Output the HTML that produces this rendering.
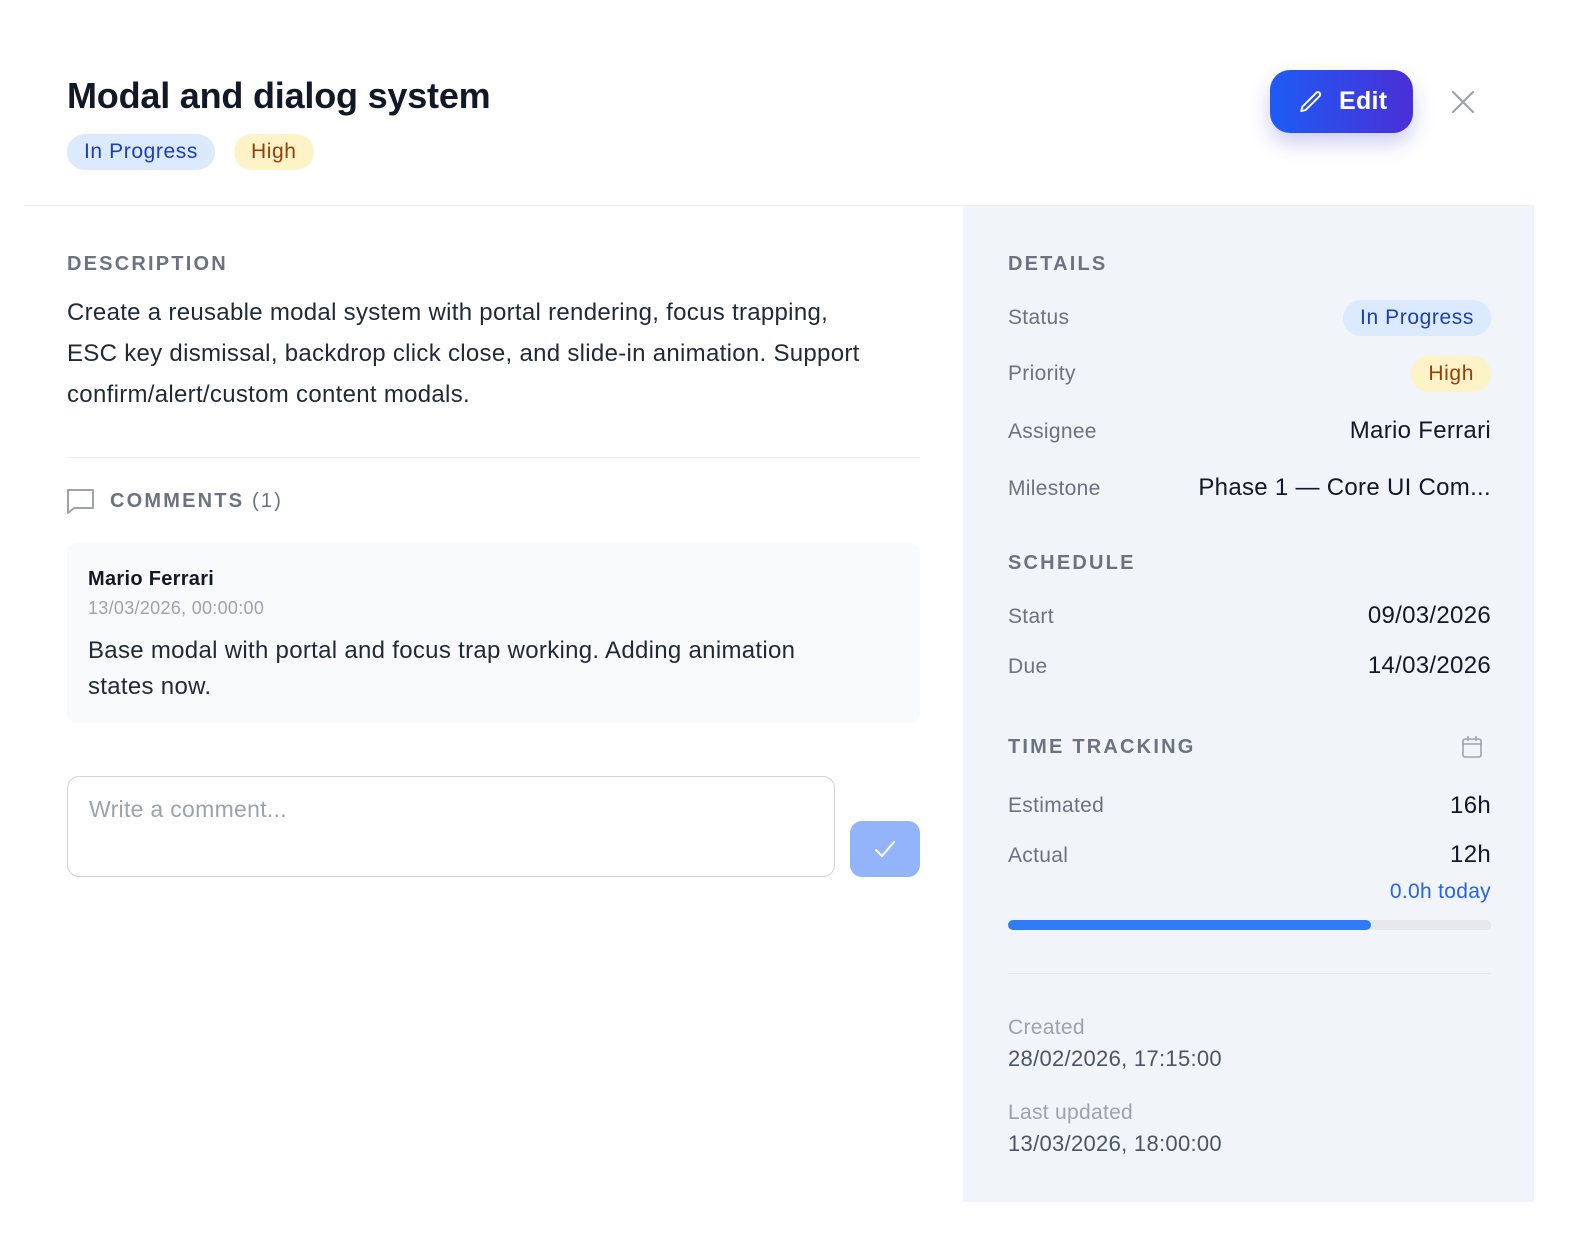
<!DOCTYPE html>
<html><head><meta charset="utf-8"><style>
*{margin:0;padding:0;box-sizing:border-box}
body{width:1582px;height:1250px;background:#fff;font-family:"Liberation Sans",Arial,sans-serif;position:relative;overflow:hidden;color:#1f2937;letter-spacing:0.3px}
.a{position:absolute;white-space:nowrap}
.lbl{font-size:20px;font-weight:bold;letter-spacing:2.2px;color:#6b7280;line-height:24px}
.k{font-size:21px;color:#6b7280;line-height:26px;left:1008px}
.v{font-size:24px;color:#111827;line-height:28px;right:91px}
.pill{border-radius:18px;font-size:21px;line-height:36px;padding:0 17px;letter-spacing:0.6px}
.blue{background:#dbeafe;color:#1e40af}
.yel{background:#fef3c7;color:#92400e}
</style></head><body>
<div class="a" style="left:67px;top:74px;font-size:36px;font-weight:bold;color:#111827;line-height:44px;letter-spacing:-0.2px">Modal and dialog system</div>
<div class="a pill blue" style="left:67px;top:134px">In Progress</div>
<div class="a pill yel" style="left:234px;top:134px">High</div>
<div class="a" style="left:1270px;top:70px;width:143px;height:63px;border-radius:20px;background:linear-gradient(90deg,#1d5cf5,#4a2fd6);box-shadow:0 10px 20px rgba(60,60,200,.25);color:#fff;font-size:25px;font-weight:bold;line-height:63px;padding-left:69px">Edit
<svg style="position:absolute;left:28px;top:19px" width="26" height="26" viewBox="0 0 24 24" fill="none" stroke="#fff" stroke-width="1.8" stroke-linecap="round" stroke-linejoin="round"><path d="M16.9 3.5a2.1 2.1 0 0 1 3 3L7 19.4l-4 1 1-4z"/></svg></div>
<svg class="a" style="left:1451px;top:90px" width="24" height="24" viewBox="0 0 24 24" stroke="#9ca3af" stroke-width="2.2" stroke-linecap="round"><path d="M2 2L22 22M22 2L2 22"/></svg>
<div class="a" style="left:24px;top:205px;width:1510px;height:1px;background:#eef0f3"></div>
<div class="a" style="left:963px;top:206px;width:571px;height:996px;background:#f1f4f8"></div>

<div class="a lbl" style="left:67px;top:252px">DESCRIPTION</div>
<div class="a" style="left:67px;top:292px;font-size:24px;line-height:41px;white-space:normal;width:800px;color:#1f2937">Create a reusable modal system with portal rendering, focus trapping, ESC key dismissal, backdrop click close, and slide-in animation. Support confirm/alert/custom content modals.</div>
<div class="a" style="left:67px;top:457px;width:853px;height:1px;background:#eef0f3"></div>
<svg class="a" style="left:66px;top:487px" width="29" height="28" viewBox="0 0 29 28" fill="none" stroke="#9ca3af" stroke-width="2" stroke-linejoin="round"><path d="M2 3h25v18H8l-6 5z"/></svg>
<div class="a lbl" style="left:110px;top:489px">COMMENTS <span style="font-weight:normal">(1)</span></div>
<div class="a" style="left:67px;top:543px;width:853px;height:180px;background:#f8fafc;border-radius:10px"></div>
<div class="a" style="left:88px;top:567px;font-size:20px;font-weight:bold;color:#111827;line-height:24px">Mario Ferrari</div>
<div class="a" style="left:88px;top:597px;font-size:18px;color:#9ca3af;line-height:22px">13/03/2026, 00:00:00</div>
<div class="a" style="left:88px;top:633px;font-size:24px;line-height:36px;color:#1f2937;white-space:normal;width:770px">Base modal with portal and focus trap working. Adding animation states now.</div>
<div class="a" style="left:67px;top:776px;width:768px;height:101px;border:1px solid #d1d5db;border-radius:12px"></div>
<div class="a" style="left:89px;top:795px;font-size:23px;color:#9ca3af;line-height:28px">Write a comment...</div>
<div class="a" style="left:850px;top:821px;width:70px;height:56px;border-radius:12px;background:#93b4fb"></div>
<svg class="a" style="left:874px;top:838px" width="22" height="22" viewBox="0 0 22 22" fill="none" stroke="#fff" stroke-width="2" stroke-linecap="round" stroke-linejoin="round"><path d="M2 12l6 6L20 4"/></svg>

<div class="a lbl" style="left:1008px;top:252px">DETAILS</div>
<div class="a k" style="top:305px">Status</div>
<div class="a pill blue" style="right:91px;top:300px">In Progress</div>
<div class="a k" style="top:361px">Priority</div>
<div class="a pill yel" style="right:91px;top:356px">High</div>
<div class="a k" style="top:419px">Assignee</div>
<div class="a v" style="top:417px">Mario Ferrari</div>
<div class="a k" style="top:476px">Milestone</div>
<div class="a v" style="top:474px">Phase 1 — Core UI Com...</div>
<div class="a lbl" style="left:1008px;top:551px">SCHEDULE</div>
<div class="a k" style="top:604px">Start</div>
<div class="a v" style="top:602px">09/03/2026</div>
<div class="a k" style="top:654px">Due</div>
<div class="a v" style="top:652px">14/03/2026</div>
<div class="a lbl" style="left:1008px;top:735px">TIME TRACKING</div>
<svg class="a" style="left:1461px;top:735px" width="22" height="24" viewBox="0 0 22 24" fill="none" stroke="#9ca3af" stroke-width="1.6"><rect x="2" y="4" width="18" height="18" rx="2"/><path d="M2 9h18M7 1v5M15 1v5"/></svg>
<div class="a k" style="top:793px">Estimated</div>
<div class="a v" style="top:792px">16h</div>
<div class="a k" style="top:843px">Actual</div>
<div class="a v" style="top:841px">12h</div>
<div class="a" style="right:91px;top:879px;font-size:21px;color:#2563eb;line-height:26px">0.0h today</div>
<div class="a" style="left:1008px;top:920px;width:483px;height:10px;border-radius:5px;background:#e5e7eb"></div>
<div class="a" style="left:1008px;top:920px;width:363px;height:10px;border-radius:5px;background:#2f7bf5"></div>
<div class="a" style="left:1008px;top:973px;width:483px;height:1px;background:#e5e7eb"></div>
<div class="a" style="left:1008px;top:1015px;font-size:21px;color:#9ca3af;line-height:26px">Created</div>
<div class="a" style="left:1008px;top:1046px;font-size:22px;color:#4b5563;line-height:26px">28/02/2026, 17:15:00</div>
<div class="a" style="left:1008px;top:1100px;font-size:21px;color:#9ca3af;line-height:26px">Last updated</div>
<div class="a" style="left:1008px;top:1131px;font-size:22px;color:#4b5563;line-height:26px">13/03/2026, 18:00:00</div>
</body></html>
